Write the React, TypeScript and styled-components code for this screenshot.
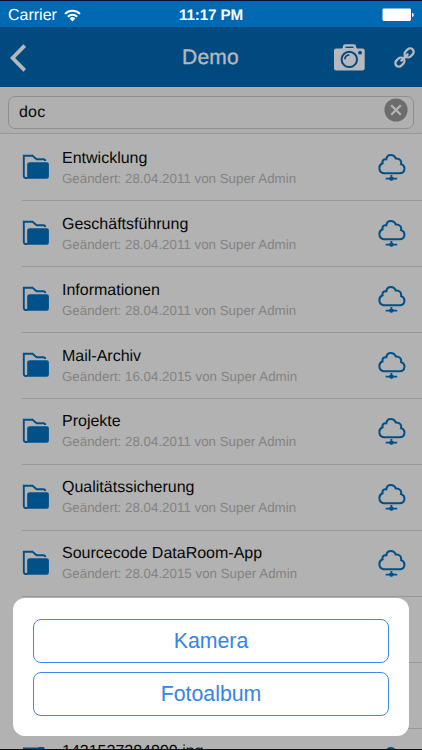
import React from "react";
import styled, { createGlobalStyle } from "styled-components";

const GlobalStyle = createGlobalStyle`
  * { box-sizing: border-box; }
  body { margin: 0; background: #b2b2b2; }
`;

const Screen = styled.div`
  position: relative;
  display: flex;
  flex-direction: column;
  width: 422px;
  height: 750px;
  overflow: hidden;
  background: #b2b2b2;
  border-top: 1px solid #06113a;
  border-bottom: 1px solid #111;
  font-family: "Liberation Sans", Arial, sans-serif;
  text-rendering: geometricPrecision;
  color: #080808;
`;

const StatusBar = styled.header`
  flex: none;
  display: grid;
  grid-template-columns: 1fr auto 1fr;
  align-items: center;
  height: 26px;
  padding: 2px 8px 0;
  background: #0069b4;
  color: #fff;
  font-size: 16px;
  line-height: 22px;
`;

const Carrier = styled.div`
  display: flex;
  align-items: center;
  gap: 7px;
  padding-top: 1px;
`;

const Clock = styled.div`
  padding-top: 1px;
  font-weight: 700;
  font-size: 15.2px;
  letter-spacing: -0.1px;
`;

const BatterySlot = styled.div`
  display: flex;
  justify-content: flex-end;
`;

const NavBar = styled.nav`
  flex: none;
  display: grid;
  grid-template-columns: 1fr auto 1fr;
  align-items: center;
  height: 60px;
  padding: 1px 7px 0 9px;
  background: #004a7f;
  color: #b5b8bc;
`;

const Title = styled.h1`
  margin: 0 3px 0 0;
  font-size: 21px;
  font-weight: 400;
  line-height: 26px;
  letter-spacing: 0.25px;
  -webkit-text-stroke: 0.4px currentColor;
`;

const NavActions = styled.div`
  display: flex;
  justify-content: flex-end;
  align-items: center;
  gap: 29px;
`;

const SearchBar = styled.div`
  flex: none;
  height: 47px;
  padding: 9px 8px 0;
  background: #aeaeae;
  border-bottom: 1px solid #989898;
`;

const SearchField = styled.div`
  display: flex;
  align-items: center;
  justify-content: space-between;
  height: 33px;
  padding: 0 5px 0 10px;
  border: 1px solid #8f8f8f;
  border-radius: 7px;
  background: #b0b0b0;
  font-size: 16px;
  letter-spacing: 0.2px;
  svg { margin-top: -5px; }
`;

const List = styled.ul`
  flex: none;
  margin: 0;
  padding: 1.6px 0 0;
  list-style: none;
`;

const Row = styled.li`
  display: flex;
  height: 65.9px;
  margin-left: 22px;
  padding-right: 16px;
  border-bottom: 1px solid #979799;
  color: #005089;
`;

const IconCell = styled.div<{ $top: number; $width: number }>`
  flex: none;
  width: ${(p) => p.$width}px;
  padding-top: ${(p) => p.$top}px;
`;

const Details = styled.div`
  flex: 1;
  min-width: 0;
  padding-top: 13.3px;
  white-space: nowrap;
`;

const Name = styled.div`
  color: #080808;
  font-size: 16px;
  line-height: 20px;
`;

const Modified = styled.div`
  margin-top: 1px;
  color: #838383;
  font-size: 13.3px;
  line-height: 18px;
  letter-spacing: 0.02px;
`;

const ActionSheet = styled.div`
  position: absolute;
  left: 13px;
  bottom: 13px;
  display: flex;
  flex-direction: column;
  gap: 9px;
  width: 396px;
  height: 138px;
  padding: 21px 20px 20px;
  border-radius: 12px;
  background: #fff;
`;

const SheetButton = styled.button`
  height: 44px;
  padding: 0;
  border: 1px solid #3d8be9;
  border-radius: 8px;
  background: #fff;
  color: #3584e8;
  font: 400 21.3px/42px "Liberation Sans", Arial, sans-serif;
`;

const WifiIcon = () => (
  <svg width="17" height="13" viewBox="0 0 17 13" fill="none" stroke="#fff" strokeWidth="2">
    <path d="M1 4.9a10.6 10.6 0 0 1 15 0M3.8 7.7a6.7 6.7 0 0 1 9.4 0" />
    <path d="M5.7 9.4a4 4 0 0 1 5.6 0L8.5 12.4z" fill="#fff" stroke="none" />
  </svg>
);

const BatteryIcon = () => (
  <svg width="32" height="14" viewBox="0 0 32 14" fill="#fff">
    <rect x="0.5" y="0.5" width="28.5" height="12.5" rx="1.4" />
    <path d="M30.1 4.7c2.2.6 2.2 3.8 0 4.4z" />
  </svg>
);

const BackIcon = () => (
  <svg width="18" height="28" viewBox="0 0 18 28" fill="none" stroke="currentColor" strokeWidth="3.7">
    <path d="M15.7 1.6 3.6 14l12.1 12.4" />
  </svg>
);

const CameraIcon = () => (
  <svg width="31" height="27" viewBox="0 0 31 27" fill="none">
    <path
      fill="currentColor"
      d="M2 4.5h6l1-1.6V2q.2-1.7 2-1.7h9q1.8 0 2 1.7v.9l1 1.6h5.4q2.3 0 2.3 2v17.7q0 2.2-2.3 2.2H2.3Q0 26.400 0 24.200V6.500q0-2 2-2z"
    />
    <path d="M11.500 3.300h8" stroke="#004a7f" strokeWidth="1.400" />
    <circle cx="15.300" cy="15.400" r="7.700" stroke="#004a7f" strokeWidth="2" />
    <path d="M10.900 15.300a4.500 4.500 0 0 1 4.500-4.500" stroke="#004a7f" strokeWidth="1.800" />
    <circle cx="26" cy="8.700" r="1.900" fill="#004a7f" />
  </svg>
);

const LinkIcon = () => (
  <svg width="21" height="21" viewBox="0 0 21 21" fill="none" stroke="currentColor" strokeWidth="2.300">
    <g transform="rotate(-45 10.500 10.500)">
      <rect x="-1" y="7" width="10" height="7" rx="3.500" />
      <rect x="12" y="7" width="10" height="7" rx="3.500" />
      <path d="M6.300 10.500h8.400" strokeWidth="2.600" strokeLinecap="round" />
    </g>
  </svg>
);

const ClearIcon = () => (
  <svg width="24" height="24" viewBox="0 0 24 24">
    <circle cx="12" cy="12" r="11.600" fill="#6c6c6c" />
    <path d="m7.200 7.200 9.600 9.600m0-9.600-9.600 9.600" stroke="#b4b4b4" strokeWidth="2.300" />
  </svg>
);

const FolderIcon = () => (
  <svg width="28" height="26" viewBox="0 0 28 26" fill="none">
    <path
      d="M5 24H3.800Q1.800 24 1.800 21.800V1.800h8.700l4.100 3.400h6.600q2 0 2 1.700"
      stroke="currentColor"
      strokeWidth="1.900"
    />
    <path d="M8.200 8.200h16.500q2.200 0 2.200 2v12.400q0 2.200-2.200 2.200H3.400q1.800-.5 1.800-2.400V10.500q0-2.300 3-2.300z" fill="currentColor" />
  </svg>
);

const CloudIcon = () => (
  <svg width="29" height="28" viewBox="0 0 29 28" fill="none" stroke="currentColor">
    <path
      strokeWidth="2"
      d="M6.500 19.200a5.200 5.200 0 0 1-.9-9.900C4.900 6.500 7 4.700 9.300 5.300 9.800 2.300 11.400 1.100 13.700 1.100c2.500 0 4.200 1.300 5 3.400 3.600-.4 6.200 2.300 5.300 5.600 5.300 1.700 4.200 9.100-1.300 9.100z"
    />
    <path strokeWidth="1.900" d="M14.400 21v5.800M8.700 24.600h11.500" />
    <path strokeWidth="3.200" d="M12.400 24.600h4" />
  </svg>
);

const FileIcon = () => (
  <svg width="28" height="26" viewBox="0 0 28 26" fill="none" stroke="currentColor" strokeWidth="2">
    <path d="M2 25V1.500h17l5 5V25" />
    <path d="M18 1h3l4 5-4-1z" fill="currentColor" />
  </svg>
);

const entries = [
  { name: "Entwicklung", date: "28.04.2011" },
  { name: "Geschäftsführung", date: "28.04.2011" },
  { name: "Informationen", date: "28.04.2011" },
  { name: "Mail-Archiv", date: "16.04.2015" },
  { name: "Projekte", date: "28.04.2011" },
  { name: "Qualitätssicherung", date: "28.04.2011" },
  { name: "Sourcecode DataRoom-App", date: "28.04.2015" },
  { name: "", date: "" },
  { name: "", date: "" },
  { name: "1431527284890.jpg", date: "", file: true },
];

export default function App() {
  return (
    <>
      <GlobalStyle />
      <Screen>
        <StatusBar>
          <Carrier>Carrier<WifiIcon /></Carrier>
          <Clock>11:17 PM</Clock>
          <BatterySlot><BatteryIcon /></BatterySlot>
        </StatusBar>
        <NavBar>
          <BackIcon />
          <Title>Demo</Title>
          <NavActions><CameraIcon /><LinkIcon /></NavActions>
        </NavBar>
        <SearchBar>
          <SearchField>doc<ClearIcon /></SearchField>
        </SearchBar>
        <List>
          {entries.map((entry, index) => (
            <Row key={index}>
              <IconCell $top={18.8} $width={40}>{entry.file ? <FileIcon /> : <FolderIcon />}</IconCell>
              <Details>
                <Name>{entry.name}</Name>
                {entry.date && <Modified>Geändert: {entry.date} von Super Admin</Modified>}
              </Details>
              <IconCell $top={18.6} $width={29}><CloudIcon /></IconCell>
            </Row>
          ))}
        </List>
        <ActionSheet>
          <SheetButton>Kamera</SheetButton>
          <SheetButton>Fotoalbum</SheetButton>
        </ActionSheet>
      </Screen>
    </>
  );
}
